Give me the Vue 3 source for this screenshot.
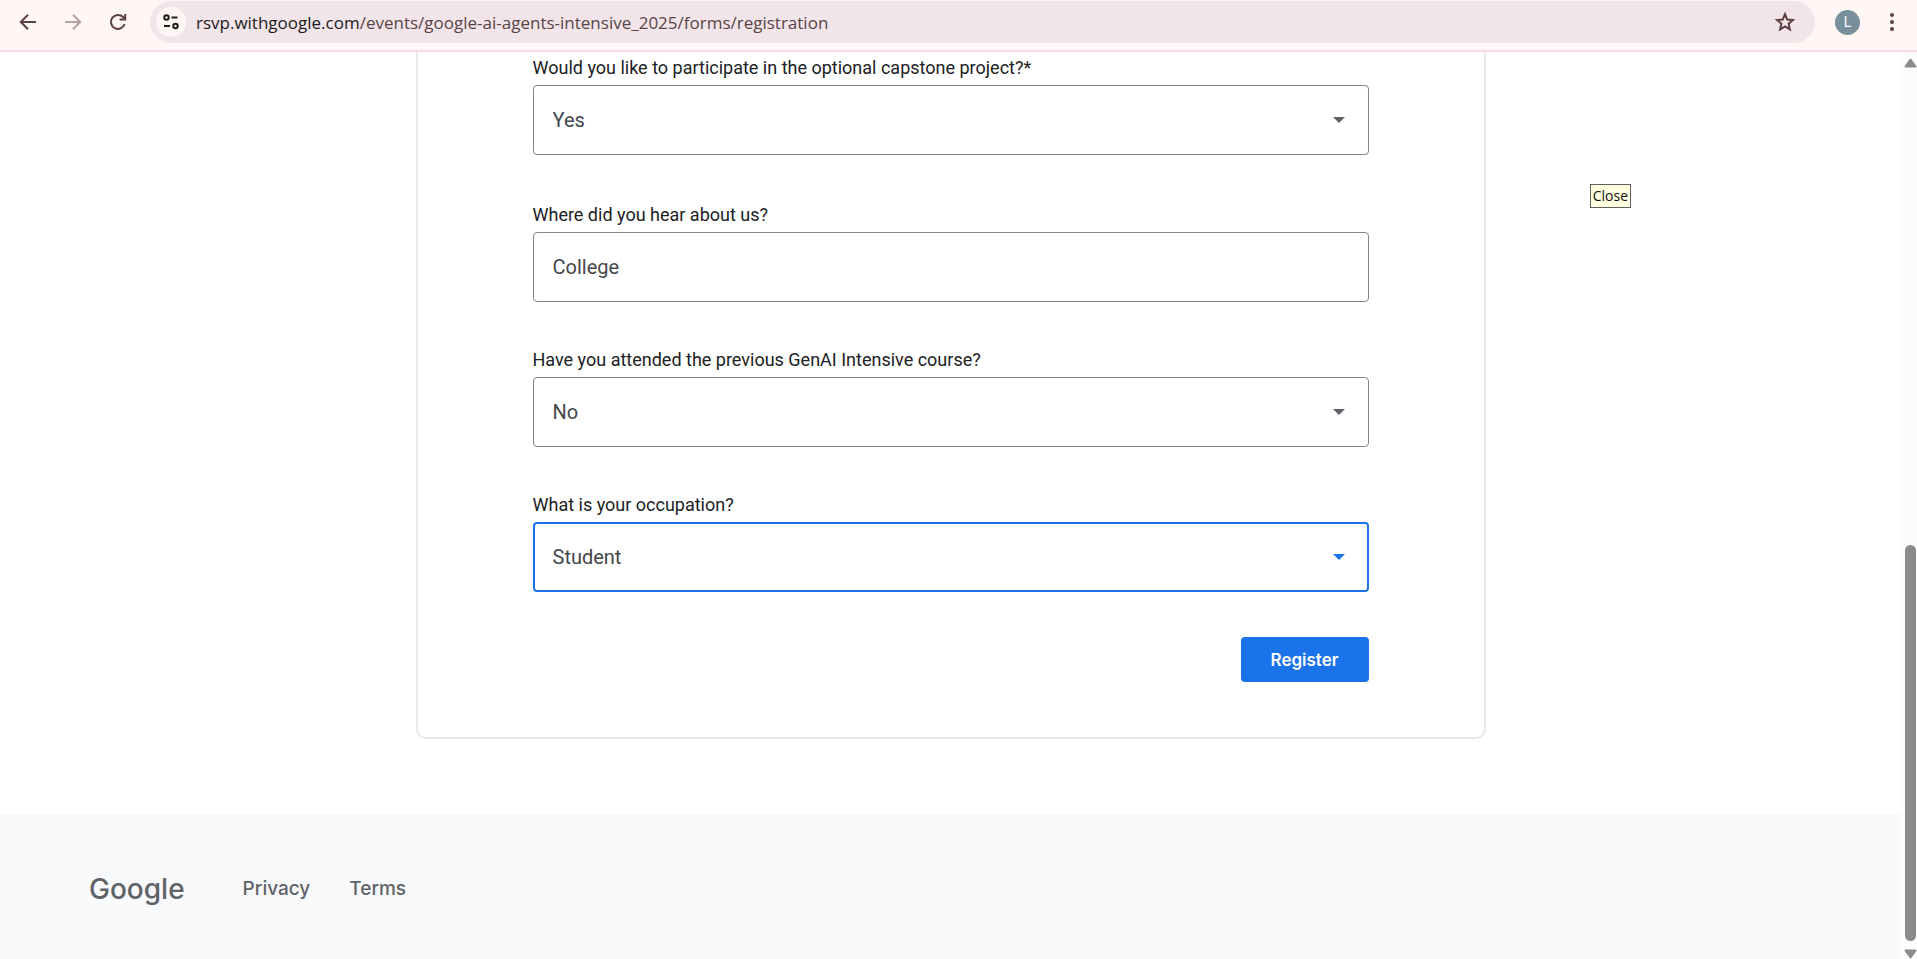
<script setup>
import { ref } from 'vue'

const address = { host: 'rsvp.withgoogle.com', path: '/events/google-ai-agents-intensive_2025/forms/registration' }

const fields = ref([
  { id: 'capstone', label: 'Would you like to participate in the optional capstone project?*', type: 'select', value: 'Yes', options: ['Yes', 'No'], required: true },
  { id: 'source', label: 'Where did you hear about us?', type: 'text', value: 'College' },
  { id: 'attended', label: 'Have you attended the previous GenAI Intensive course?', type: 'select', value: 'No', options: ['Yes', 'No'] },
  { id: 'occupation', label: 'What is your occupation?', type: 'select', value: 'Student', options: ['Student', 'Professional'], active: true }
])
</script>

<template>
  <div class="browser">
    <header class="toolbar">
      <nav class="nav" aria-label="Browser navigation">
        <button type="button" class="icon" aria-label="Back">
          <svg viewBox="0 0 24 24"><path d="M20 12H5.5M12 4.8L4.8 12l7.2 7.2" /></svg>
        </button>
        <button type="button" class="icon dim" aria-label="Forward">
          <svg viewBox="0 0 24 24"><path d="M4 12h14.5M12 4.8l7.2 7.2-7.2 7.2" /></svg>
        </button>
        <button type="button" class="icon" aria-label="Reload">
          <svg viewBox="0 0 24 24"><path d="M18.6 14.2A7 7 0 1 1 17 7l2 2M19.2 4v5.6h-5.6" /></svg>
        </button>
      </nav>
      <div class="omnibox">
        <button type="button" class="site-info" aria-label="View site information">
          <svg viewBox="0 0 18 18">
            <circle cx="4.5" cy="4.5" r="2.2" /><path d="M9.5 4.5h6M2 13h6" /><circle cx="13.5" cy="13" r="2.2" />
          </svg>
        </button>
        <div class="url"><span class="host">{{ address.host }}</span>{{ address.path }}</div>
        <button type="button" class="icon star" aria-label="Bookmark this tab">
          <svg viewBox="0 0 24 24"><path d="M12 4.2l2.2 5.3 5.7.5-4.3 3.7 1.3 5.6-4.9-3-4.9 3 1.3-5.6L4.100 10l5.700-.5z" /></svg>
        </button>
      </div>
      <button type="button" class="avatar" aria-label="Profile">L</button>
      <button type="button" class="icon" aria-label="Menu">
        <svg class="dots" viewBox="0 0 24 24"><circle cx="12" cy="5" r="2" /><circle cx="12" cy="12" r="2" /><circle cx="12" cy="19" r="2" /></svg>
      </button>
    </header>

    <div class="viewport">
      <div class="page">
        <main class="main">
          <form class="card" @submit.prevent>
            <div v-for="f in fields" :key="f.id" class="field" :class="{ active: f.active, required: f.required }">
              <label :for="f.id">{{ f.label }}</label>
              <div class="control">
                <template v-if="f.type === 'select'">
                  <select :id="f.id" v-model="f.value">
                    <option v-for="o in f.options" :key="o">{{ o }}</option>
                  </select>
                  <svg class="caret" viewBox="0 0 12 6"><path d="M0 0h12L6 6z" /></svg>
                </template>
                <input v-else :id="f.id" v-model="f.value" type="text" />
              </div>
            </div>
            <button type="submit" class="register">Register</button>
          </form>
        </main>
        <footer class="footer">
          <a href="#" class="logo">Google</a>
          <a href="#">Privacy</a>
          <a href="#">Terms</a>
        </footer>
      </div>
      <div class="scrollbar" aria-hidden="true">
        <svg viewBox="0 0 13 10"><path d="M6.500 1.500L11.500 8.500H1.500z" /></svg>
        <div class="track"><div class="thumb"></div></div>
        <svg viewBox="0 0 13 10"><path d="M6.500 8.500L11.500 1.500H1.500z" /></svg>
      </div>
      <div class="tooltip" role="tooltip">Close</div>
    </div>
  </div>
</template>

<style>
body { margin: 0; }
</style>

<style scoped>
* { box-sizing: border-box; }
.browser {
  display: flex;
  flex-direction: column;
  height: 100vh;
  overflow: hidden;
  background: #fff;
  font-family: Roboto, "Liberation Sans", sans-serif;
}
button { border: 0; padding: 0; background: none; font-family: inherit; cursor: pointer; }
.toolbar {
  display: flex;
  align-items: center;
  flex: none;
  padding: 1px 13px 7px 16px;
  background: #fff7f5;
  border-bottom: 2px solid #f4dce0;
}
.nav { display: flex; gap: 21px; margin-right: 20px; }
.icon { display: block; width: 24px; height: 24px; color: #5c3f43; flex: none; }
.icon svg { display: block; width: 24px; height: 24px; fill: none; stroke: currentColor; stroke-width: 2; }
.dim { color: #b5a3a4; }
.icon .dots { fill: currentColor; stroke: none; }
.omnibox {
  display: flex;
  align-items: center;
  flex: 1;
  min-width: 0;
  height: 42px;
  padding: 0 18px 0 6px;
  border-radius: 21px;
  background: #f2e5e9;
}
.site-info {
  display: flex;
  align-items: center;
  justify-content: center;
  width: 30px;
  height: 30px;
  border-radius: 50%;
  background: #fff7f5;
}
.site-info svg { width: 18px; height: 18px; fill: none; stroke: #201a1b; stroke-width: 2; }
.url {
  flex: 1;
  margin-left: 10px;
  padding-top: 2px;
  font-family: "Open Sans", "Noto Sans", sans-serif;
  font-size: 17px;
  line-height: 24px;
  color: #594447;
  white-space: nowrap;
  overflow: hidden;
}
.host { color: #201a1b; }
.avatar {
  width: 25px;
  height: 25px;
  margin: 0 20px;
  border-radius: 50%;
  background: #78909c;
  color: #fff;
  font-size: 14px;
  line-height: 25px;
  text-align: center;
}
.viewport { position: relative; display: flex; flex: 1; min-height: 0; }
.page { display: flex; flex-direction: column; flex: 1; min-width: 0; overflow: hidden; }
.main { flex: 1; padding: 0 24px; }
.card {
  display: flex;
  flex-direction: column;
  gap: 45px;
  max-width: 1070px;
  margin: 0 auto;
  padding: 3px 115px 55px;
  border: 2px solid #e8e8ee;
  border-top: 0;
  border-radius: 0 0 10px 10px;
}
.field { display: flex; flex-direction: column; gap: 5px; }
.required { padding-bottom: 2px; }
label { font-size: 18px; line-height: 25px; color: #202124; }
.control { position: relative; }
select, input {
  display: block;
  width: 100%;
  height: 70px;
  padding: 0 19px;
  border: 1px solid #80868b;
  border-radius: 4px;
  background: #fff;
  color: #444749;
  font-family: inherit;
  font-size: 20px;
  outline: none;
  appearance: none;
}
.active select { border: 2px solid #1a73e8; padding: 0 18px; }
.caret { position: absolute; right: 24px; top: 32px; width: 12px; height: 6px; fill: #5f6368; pointer-events: none; }
.active .caret { fill: #1a73e8; }
.register {
  align-self: flex-end;
  padding: 0 30px;
  height: 45px;
  border-radius: 4px;
  background: #1a73e8;
  color: #fff;
  font-family: Inter, sans-serif;
  font-weight: 600;
  font-size: 17px;
}
.footer {
  display: flex;
  align-items: center;
  flex: none;
  gap: 39px;
  height: 145px;
  padding: 4px 89px 0;
  background: #f8f9fb;
}
.footer a { font-family: Inter, sans-serif; font-weight: 500; font-size: 19px; color: #5f6368; text-decoration: none; }
.footer .logo { margin-right: 19px; font-size: 28px; line-height: 40px; }
.scrollbar {
  display: flex;
  flex-direction: column;
  align-items: center;
  flex: none;
  width: 16px;
  padding: 6px 0 0 3px;
  background: #fcfcfc;
}
.scrollbar svg { width: 13px; height: 10px; fill: #8b8b8b; stroke: #8b8b8b; stroke-width: 2; stroke-linejoin: round; flex: none; }
.track { display: flex; flex-direction: column; justify-content: flex-end; flex: 1; padding-bottom: 8px; }
.thumb { width: 11px; height: 396px; border-radius: 6px; background: #8b8b8b; }
.tooltip {
  position: absolute;
  top: 132px;
  right: 286px;
  padding: 0 2px;
  border: 1px solid #5f5f5f;
  background: #ffffe1;
  color: #111;
  font-family: "Open Sans", sans-serif;
  font-size: 14px;
  line-height: 22px;
}
</style>
